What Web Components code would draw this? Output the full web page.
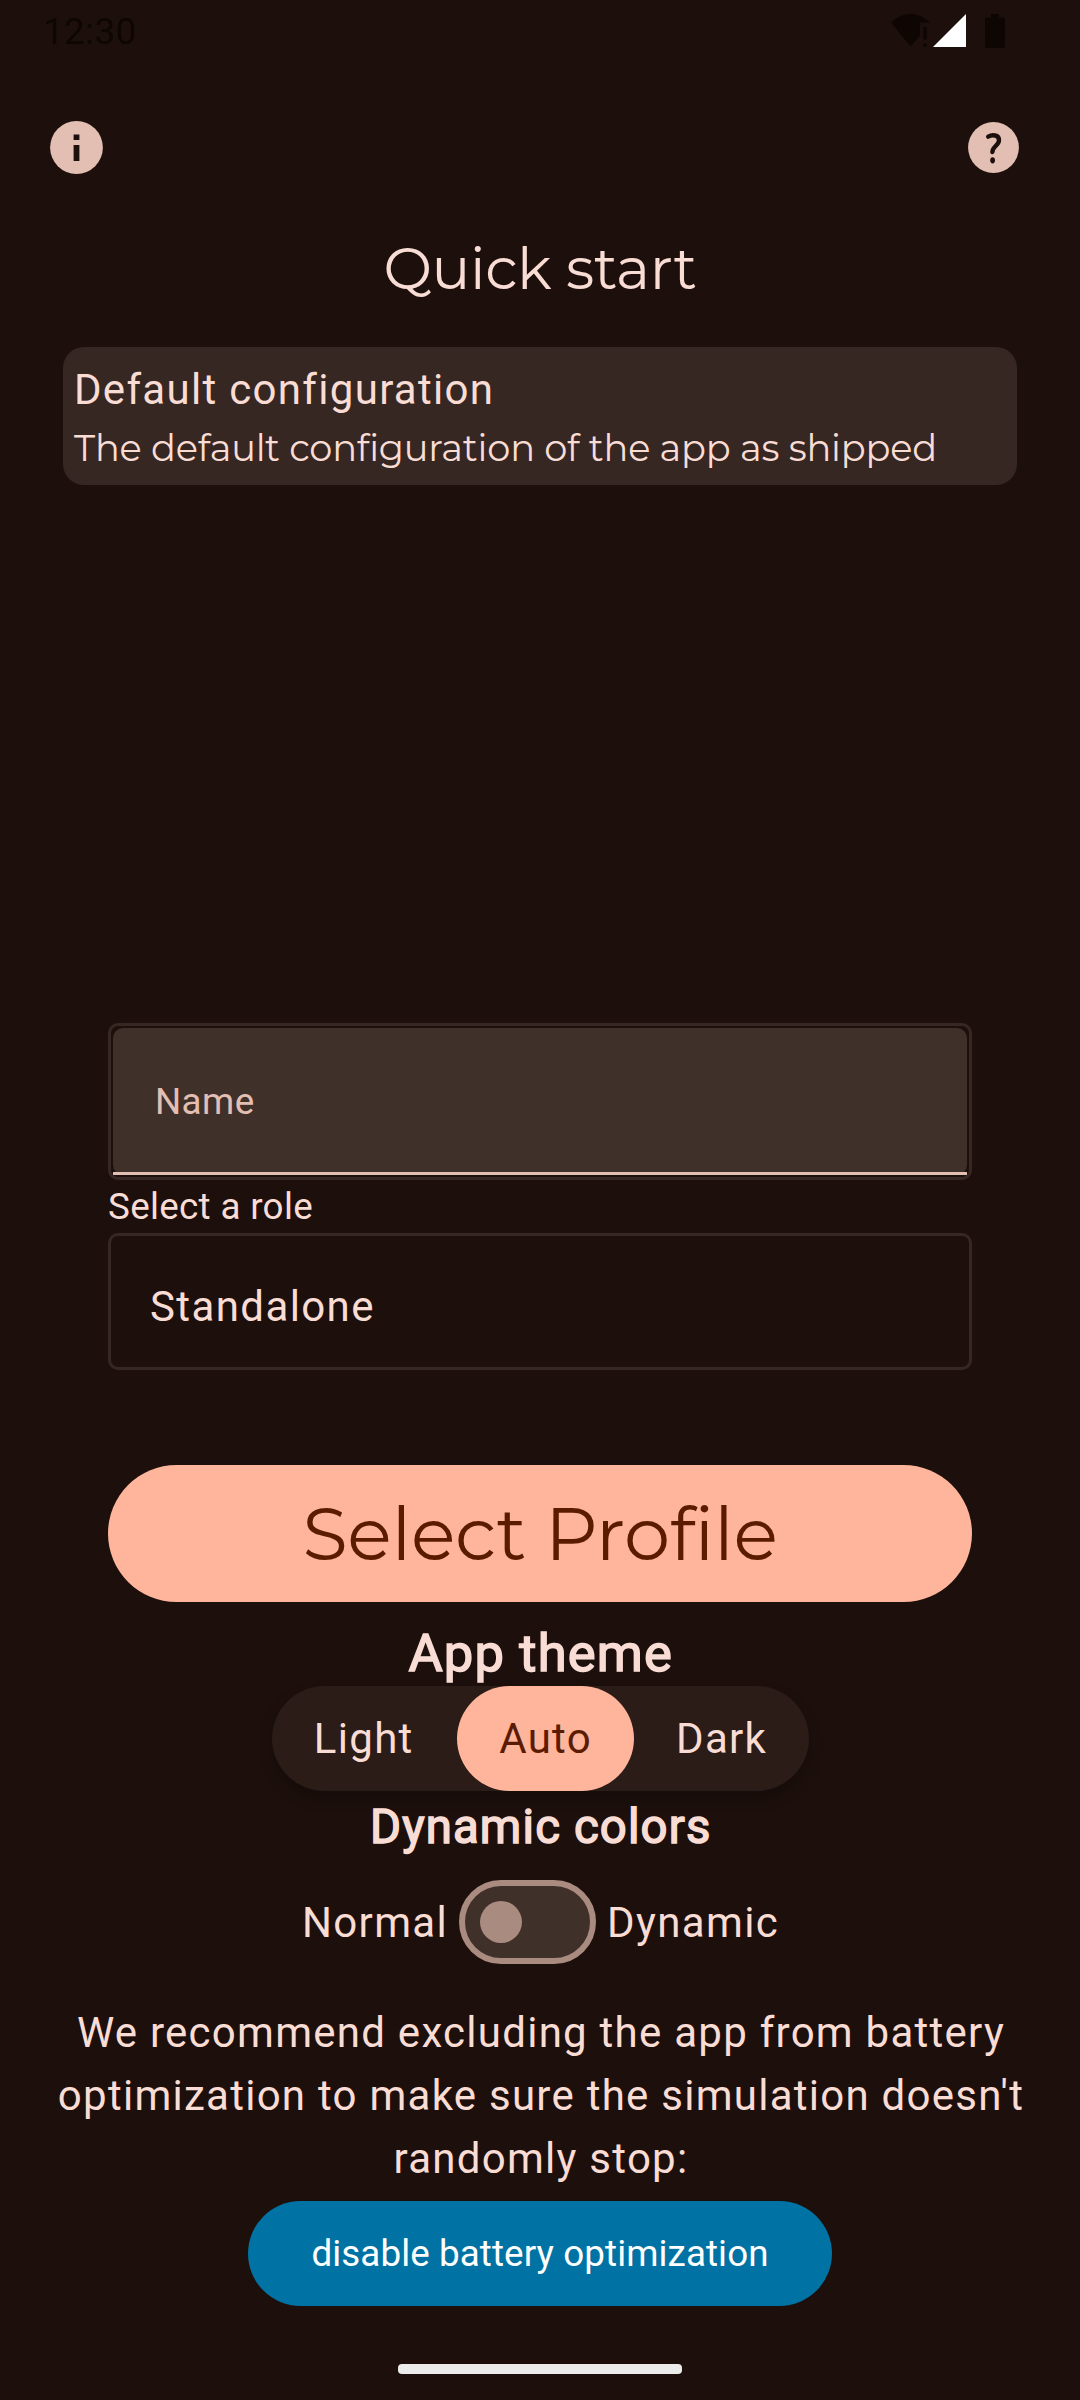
<!DOCTYPE html>
<html lang="en">
<head>
<meta charset="utf-8">
<title>Quick start</title>
<style>
html,body{margin:0;padding:0;background:#1d100c}
body{font-family:Roboto,sans-serif;color:#f9ddd5;width:1080px;height:2400px;overflow:hidden}
</style>
</head>
<body>
<start-screen></start-screen>
<script>
function define(name, html) {
  const template = document.createElement('template');
  template.innerHTML = html;
  customElements.define(name, class extends HTMLElement {
    connectedCallback() {
      if (this.shadowRoot) return;
      this.attachShadow({ mode: 'open' }).append(template.content.cloneNode(true));
    }
  });
}

define('status-bar', `
<style>
:host{display:flex;height:63px;flex:none;box-sizing:border-box;padding:0 75px 0 43px;justify-content:space-between;align-items:center;color:#0d0603;font-size:36.75px;line-height:63px;letter-spacing:.4px}
svg{display:block}
</style>
<span>12:30</span>
<svg width="114" height="63" viewBox="891 0 114 63">
<path fill="#0d0603" d="M891 22.5Q900 14 910.5 14Q921 14 930 22.5H920V35.5L910.7 46.5Z"/>
<path fill="#0d0603" d="M923.3 27h3.4v12.6h-3.4zM923.3 43.3h3.4v3.4h-3.4z"/>
<path fill="#fff" d="M966 14V47H933Z"/>
<path fill="#0d0603" d="M991 14h8v3.4h4.2q1.8 0 1.8 1.8V46q0 2-1.8 2h-16.4q-1.8 0-1.8-2V19.2q0-1.8 1.8-1.8h4.2z"/>
</svg>`);

define('icon-row', `
<style>
:host{display:flex;height:168px;flex:none;box-sizing:border-box;padding:0 61px 0 50px;justify-content:space-between;align-items:center}
svg{display:block}
</style>
<svg width="53" height="53" viewBox="50 121 53 53"><circle cx="76.5" cy="147.5" r="26.4" fill="#e3bfb3"/><path fill="#1d100c" d="M73.6 134.5h5.8v5.4h-5.8zM73.6 145h5.8v16h-5.8z"/></svg>
<svg width="51" height="51" viewBox="968 122 51 51"><circle cx="993.5" cy="147.5" r="25.4" fill="#e3bfb3"/><path fill="none" stroke="#1d100c" stroke-width="4.4" stroke-linecap="round" stroke-linejoin="round" d="M988.2 136.6C992 134.5 999 134.6 999 140.2C999 145.4 992.6 146.2 992.4 152"/><ellipse cx="992.6" cy="160.3" rx="2.4" ry="3.1" fill="#1d100c"/></svg>`);

define('brand-text', `
<style>
:host{display:block;font-family:Montserrat,Lato,sans-serif;white-space:nowrap}
</style><slot></slot>`);

define('profile-card', `
<style>
:host{display:block;flex:none;box-sizing:border-box;height:138px;margin:0 63px;padding:11px;border-radius:21px;background:#362723}
.t{font-size:42px;line-height:63px;letter-spacing:1.31px}
::slotted(brand-text){font-size:36.75px;line-height:54px;letter-spacing:-.19px}
</style><div class="t"><slot name="title"></slot></div><slot></slot>`);

define('outlined-box', `
<style>
:host{display:flex;flex:none;box-sizing:border-box;border:3px solid #362723;border-radius:10px;margin:0 108px}
</style><slot></slot>`);

define('text-field', `
<style>
:host{display:flex;position:relative;flex:1;margin:2px;box-sizing:border-box;height:147px;padding:0 42px;align-items:center;color:#e3bfb3;font-size:36.75px;letter-spacing:.4px;border-radius:10px;background:#40302a}
:host::after{content:"";position:absolute;left:0;right:0;bottom:0;height:2.6px;background:#e3bfb3}
</style><slot></slot>`);

define('pill-button', `
<style>
:host{display:flex;flex:none;align-items:center;justify-content:center;border-radius:999px;background:var(--fill);color:var(--ink)}
</style><slot></slot>`);

define('section-title', `
<style>
:host{display:block;flex:none;padding-left:1.5px;text-align:center;white-space:nowrap;letter-spacing:1.17px;-webkit-text-stroke:1.5px currentColor}
</style><slot></slot>`);

define('segmented-control', `
<style>
:host{display:flex;flex:none;align-self:center;margin-left:1px;height:105px;border-radius:53px;background:#2b1c18;box-shadow:0 8px 14px rgba(0,0,0,.28)}
::slotted(span){display:flex;align-items:center;box-sizing:border-box;padding:0 42px;border-radius:53px;font-size:42px;letter-spacing:1.31px}
::slotted(:first-child){padding-right:43.5px}
::slotted([selected]){background:#ffb59b;color:#5b1b00}
</style><slot></slot>`);

define('toggle-switch', `
<style>
:host{display:flex;align-items:center;box-sizing:border-box;width:137px;height:84px;border:6px solid #a98b80;border-radius:42px;background:#40302a;padding-left:15px}
i{display:block;width:42px;height:42px;border-radius:50%;background:#a98b80}
</style><i></i>`);

define('switch-row', `
<style>
:host{display:flex;flex:none;align-self:center;align-items:center;height:84px;padding-left:1px;gap:11px;font-size:42px;line-height:52px;letter-spacing:1.35px}
::slotted(span){padding-top:1px}
</style><slot></slot>`);

define('start-screen', `
<style>
:host{display:flex;flex-direction:column;width:1080px;height:2400px;background:#1d100c}
.title{flex:none;height:77px;line-height:75px;font-size:57.75px;text-align:center;letter-spacing:-.3px}
profile-card{margin-top:39px}
.name{margin-top:538px;height:157px}
.role{flex:none;margin-left:108px;height:53px;line-height:53px;font-size:36.75px;letter-spacing:.33px}
.value{height:137px;align-items:center;padding:10px 39px 0;font-size:42px;letter-spacing:1.4px}
.go{margin:95px 108px 0;height:137px;--fill:#ffb59b;--ink:#5b1b00}
.go brand-text{font-size:73.5px;line-height:89px;letter-spacing:-.3px}
.h1{height:84px;line-height:103px;font-size:52.5px}
.h2{height:89px;line-height:72px;font-size:47.25px}
p{flex:none;margin:37px 41px 0 43px;font-size:42px;line-height:63px;letter-spacing:1.26px;text-align:center;height:189px;white-space:nowrap}
.battery{align-self:center;width:584px;height:105px;margin-top:11px;--fill:#0073a4;--ink:#fff;font-size:36.75px;letter-spacing:.1px}
.home{flex:none;align-self:center;width:284px;height:10px;margin-top:58px;border-radius:4px;background:#ececec}
</style>
<status-bar></status-bar>
<icon-row></icon-row>
<brand-text class="title">Quick start</brand-text>
<profile-card><span slot="title">Default configuration</span><brand-text>The default configuration of the app as shipped</brand-text></profile-card>
<outlined-box class="name"><text-field>Name</text-field></outlined-box>
<div class="role">Select a role</div>
<outlined-box class="value">Standalone</outlined-box>
<pill-button class="go"><brand-text>Select Profile</brand-text></pill-button>
<section-title class="h1">App theme</section-title>
<segmented-control><span>Light</span><span selected>Auto</span><span>Dark</span></segmented-control>
<section-title class="h2">Dynamic colors</section-title>
<switch-row><span>Normal</span><toggle-switch></toggle-switch><span>Dynamic</span></switch-row>
<p>We recommend excluding the app from battery<br>optimization to make sure the simulation doesn't<br>randomly stop:</p>
<pill-button class="battery">disable battery optimization</pill-button>
<div class="home"></div>`);
</script>
</body>
</html>
